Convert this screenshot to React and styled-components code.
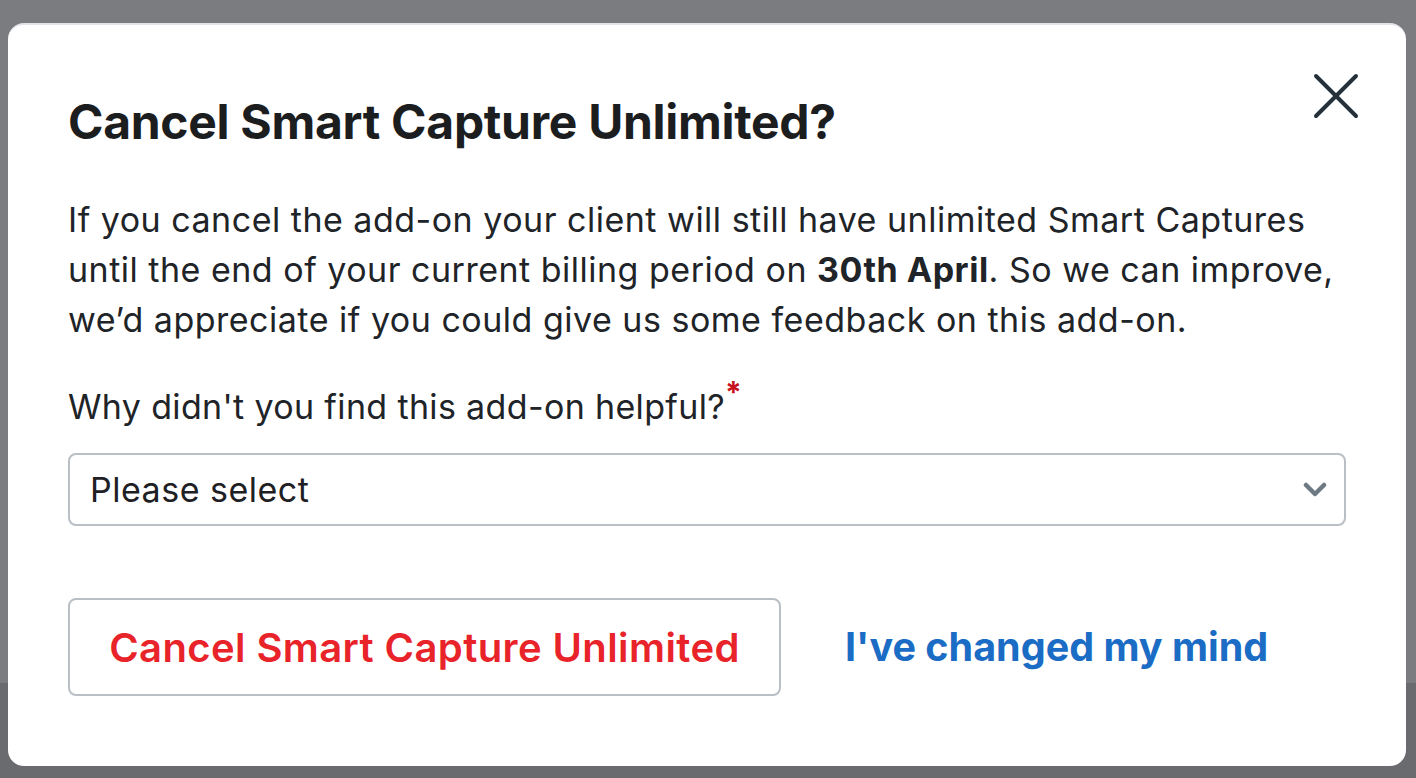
import styled, { createGlobalStyle } from 'styled-components';

const GlobalStyle = createGlobalStyle`
  html, body {
    margin: 0;
    padding: 0;
    background: #7a7b7f;
  }
  * { box-sizing: border-box; }
`;

const Backdrop = styled.div`
  width: 1416px;
  height: 778px;
  padding: 23px 10px 12px 8px;
  background: linear-gradient(#7b7c80 0, #7b7c80 683px, #6a6b6f 683px);
  font-family: Inter, "Noto Sans", sans-serif;
`;

const Dialog = styled.div`
  position: relative;
  height: 100%;
  background: #fff;
  border-radius: 16px;
  border-top: 2px solid #e3e4ea;
  padding: 68px 60px 0 60px;
  display: flex;
  flex-direction: column;
`;

const CloseButton = styled.button`
  position: absolute;
  top: 48px;
  right: 47px;
  width: 46px;
  height: 46px;
  padding: 0;
  border: none;
  background: transparent;
  cursor: pointer;
`;

const Title = styled.h2`
  margin: 0;
  font-size: 48px;
  line-height: 58px;
  font-weight: 700;
  color: #1c1d1f;
  letter-spacing: -0.3px;
`;

const Body = styled.p`
  margin: 44px 0 0;
  font-size: 34px;
  line-height: 50px;
  color: #202327;
  letter-spacing: 0.5px;

  strong { font-weight: 700; }
`;

const Label = styled.label`
  margin-top: 37px;
  font-size: 34px;
  line-height: 50px;
  color: #202327;
  letter-spacing: 0.35px;
`;

const Required = styled.span`
  color: #c8101e;
  font-weight: 700;
  font-size: 30px;
  position: relative;
  top: -16px;
  margin-left: 0;
`;

const SelectBox = styled.div`
  margin-top: 20px;
  height: 73px;
  border: 2px solid #b9bfc5;
  border-radius: 8px;
  display: flex;
  align-items: center;
  justify-content: space-between;
  padding: 0 17px 0 20px;
  font-size: 34px;
  letter-spacing: 0.5px;
  color: #1e2023;
`;

const Actions = styled.div`
  margin-top: 72px;
  display: flex;
  align-items: center;
  gap: 64px;
`;

const OutlineButton = styled.button`
  width: 713px;
  height: 98px;
  border: 2px solid #b9bfc5;
  border-radius: 8px;
  background: #fff;
  font-family: inherit;
  font-size: 40px;
  font-weight: 600;
  letter-spacing: 0.4px;
  color: #e8232a;
  cursor: pointer;
`;

const LinkButton = styled.button`
  border: none;
  background: transparent;
  padding: 0;
  font-family: inherit;
  font-size: 39.5px;
  font-weight: 700;
  color: #1a6cc4;
  cursor: pointer;
`;

function CloseIcon() {
  return (
    <svg width="46" height="46" viewBox="0 0 46 46" fill="none">
      <path d="M3 3 L43 43 M43 3 L3 43" stroke="#24313b" strokeWidth="4" strokeLinecap="round" />
    </svg>
  );
}

function Chevron() {
  return (
    <svg width="24" height="16" viewBox="0 0 24 16" fill="none">
      <path d="M3 3 L12 12 L21 3" stroke="#6d7a84" strokeWidth="4.5" strokeLinecap="round" strokeLinejoin="round" />
    </svg>
  );
}

export default function App() {
  return (
    <>
      <GlobalStyle />
      <Backdrop>
        <Dialog>
          <CloseButton aria-label="Close"><CloseIcon /></CloseButton>
          <Title>Cancel Smart Capture Unlimited?</Title>
          <Body>
            If you cancel the add-on your client will still have unlimited Smart Captures
            until the end of your current billing period on <strong>30th April</strong>. So we can improve,
            we’d appreciate if you could give us some feedback on this add-on.
          </Body>
          <Label>
            Why didn't you find this add-on helpful?<Required>*</Required>
          </Label>
          <SelectBox>
            <span>Please select</span>
            <Chevron />
          </SelectBox>
          <Actions>
            <OutlineButton>Cancel Smart Capture Unlimited</OutlineButton>
            <LinkButton>I've changed my mind</LinkButton>
          </Actions>
        </Dialog>
      </Backdrop>
    </>
  );
}
